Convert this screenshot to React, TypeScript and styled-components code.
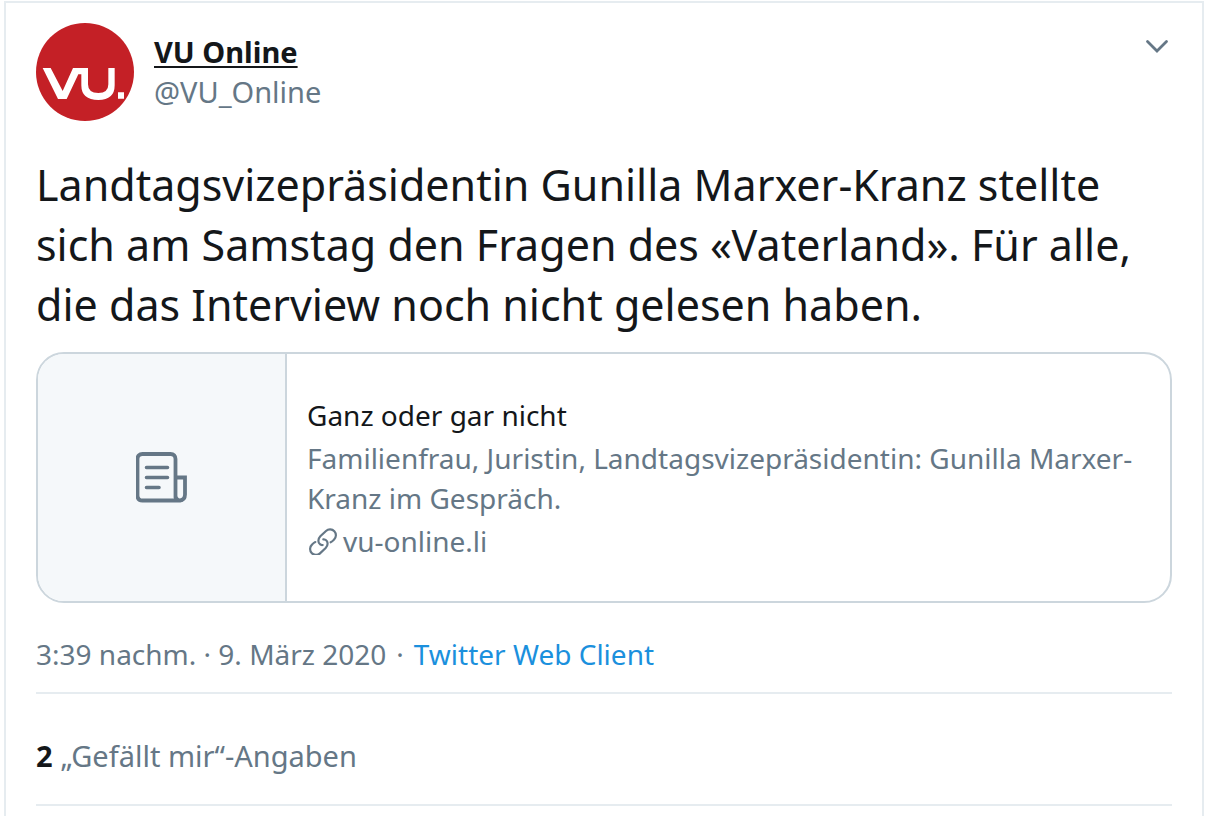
import React from "react";
import styled, { createGlobalStyle } from "styled-components";

const color = {
  text: "#14171a",
  muted: "#657786",
  icon: "#657786",
  link: "#1b90dd",
  line: "#e6ecf0",
  card: "#ccd6dd",
  cardMedia: "#f5f8fa",
  brand: "#c42026",
};

const GlobalStyle = createGlobalStyle`
  * { box-sizing: border-box; }
  body {
    margin: 0;
    background: #fff;
    color: ${color.text};
    font-family: "Segoe UI", "Noto Sans", "Open Sans", sans-serif;
    font-size: 28px;
    line-height: 40px;
  }
  a { color: inherit; text-decoration: none; }
  p, h1, h2 { margin: 0; font-weight: 400; }
`;

const Tweet = styled.article`
  margin: 1px 6px 0 4px;
  padding: 20px 30px 0;
  min-height: calc(100vh - 1px);
  border: 2px solid ${color.line};
  border-bottom: 0;
`;

const Header = styled.header`
  display: flex;
  align-items: flex-start;
  gap: 20px;
`;

const Avatar = styled.svg`
  display: block;
  width: 98px;
  height: 98px;
`;

const Author = styled.div`
  flex: 1;
  display: flex;
  flex-direction: column;
  align-items: flex-start;
  padding-top: 9px;
  font-size: 29px;
`;

const Name = styled.a`
  font-weight: 700;
  text-decoration: underline;
  text-decoration-thickness: 2px;
  text-underline-offset: 3px;
`;

const Handle = styled.a`
  color: ${color.muted};
`;

const MenuButton = styled.button`
  display: flex;
  margin-top: 12px;
  padding: 0 3px;
  border: 0;
  background: none;
  color: ${color.icon};
`;

const Message = styled.p`
  margin-top: 34px;
  font-size: 43px;
  line-height: 60px;
`;

const Card = styled.a`
  display: flex;
  min-height: 251px;
  margin-top: 17px;
  border: 2px solid ${color.card};
  border-radius: 28px;
  overflow: hidden;
`;

const CardMedia = styled.div`
  flex: 0 0 249px;
  display: flex;
  align-items: center;
  justify-content: center;
  border-right: 2px solid ${color.card};
  background: ${color.cardMedia};
  color: ${color.icon};
`;

const CardBody = styled.div`
  flex: 1;
  display: flex;
  flex-direction: column;
  justify-content: center;
  gap: 3px;
  padding: 0 20px;
  color: ${color.muted};
`;

const CardTitle = styled.h2`
  font-size: 28px;
  color: ${color.text};
`;

const Domain = styled.span`
  display: flex;
  align-items: center;
  gap: 6px;
  padding-left: 2px;
`;

const Row = styled.div`
  display: flex;
  border-bottom: 2px solid ${color.line};
  color: ${color.muted};
`;

const Meta = styled(Row)`
  gap: 10px;
  padding: 31px 0 18px;
`;

const SourceLink = styled.a`
  color: ${color.link};
`;

const Likes = styled(Row)`
  gap: 8px;
  padding: 42px 0 28px;
  font-size: 29px;
`;

const Count = styled.strong`
  color: ${color.text};
`;

const Logo = () => (
  <Avatar viewBox="0 0 294 294" role="img" aria-label="VU">
    <circle cx="147" cy="147" r="147" fill={color.brand} />
    <path
      fill="#fff"
      d="M20 135H44L80 204L111 135H156V184Q156 210 187 210Q217 210 217 184V135H236V187Q236 231 187 231Q136 231 136 187V154H127L92 228H66ZM246 208H264V227H246Z"
    />
  </Avatar>
);

const Chevron = () => (
  <svg width="24" height="24" viewBox="0 0 24 24" fill="none" stroke="currentColor" strokeWidth="2.8" strokeLinecap="round" aria-hidden="true">
    <path d="M2.500 6.500L12 16L21.500 6.500" />
  </svg>
);

const Newspaper = () => (
  <svg width="52" height="52" viewBox="0 0 52 52" fill="none" stroke="currentColor" strokeWidth="3.800" strokeLinecap="round" aria-hidden="true">
    <path d="M39.500 45.500V7Q39.500 2 34.500 2H6.500Q1.500 2 1.500 7V43.500Q1.500 48.500 6.500 48.500H43Q49 48.500 49 42.500V25.500H39.500M39.500 44Q40 48.500 44.500 48.500" />
    <path strokeWidth="3.600" d="M10.500 15.500H31.500M10.500 25.500H31.500M10.500 35.500H23" />
  </svg>
);

const LinkIcon = () => (
  <svg width="28" height="28" viewBox="27 23 84 84" fill="none" stroke="currentColor" strokeWidth="6.500" strokeLinecap="round" aria-hidden="true">
    <path d="M92 69Q97 67 102 61A17.500 17.500 0 0 0 78 35L61 51Q52 61 57 71Q61 78 68 77" />
    <path d="M46 68Q41 70 36 76A17.500 17.500 0 0 0 60 102L77 86Q86 76 81 66Q77 59 70 60" />
  </svg>
);

export default function App() {
  return (
    <>
      <GlobalStyle />
      <Tweet>
        <Header>
          <Logo />
          <Author>
            <Name href="#profile">VU Online</Name>
            <Handle href="#profile">@VU_Online</Handle>
          </Author>
          <MenuButton type="button" aria-label="Mehr">
            <Chevron />
          </MenuButton>
        </Header>
        <Message>
          Landtagsvizepräsidentin Gunilla Marxer-Kranz stellte sich am Samstag den Fragen des «Vaterland». Für alle,
          die das Interview noch nicht gelesen haben.
        </Message>
        <Card href="#article">
          <CardMedia>
            <Newspaper />
          </CardMedia>
          <CardBody>
            <CardTitle>Ganz oder gar nicht</CardTitle>
            <p>Familienfrau, Juristin, Landtagsvizepräsidentin: Gunilla Marxer-Kranz im Gespräch.</p>
            <Domain>
              <LinkIcon />
              vu-online.li
            </Domain>
          </CardBody>
        </Card>
        <Meta>
          <time dateTime="2020-03-09T15:39">3:39 nachm. · 9. März 2020</time>
          <span>·</span>
          <SourceLink href="#source">Twitter Web Client</SourceLink>
        </Meta>
        <Likes>
          <Count>2</Count>
          <span>„Gefällt mir“-Angaben</span>
        </Likes>
      </Tweet>
    </>
  );
}
